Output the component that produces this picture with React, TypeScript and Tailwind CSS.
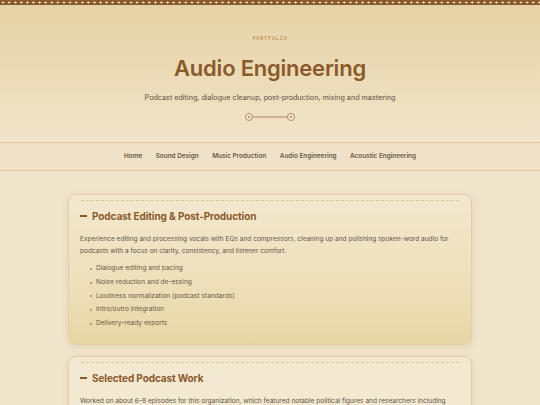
const nav = ["Home", "Sound Design", "Music Production", "Audio Engineering", "Acoustic Engineering"];

const skills = [
  "Dialogue editing and pacing",
  "Noise reduction and de-essing",
  "Loudness normalization (podcast standards)",
  "Intro/outro integration",
  "Delivery-ready exports",
];

function Ornament() {
  return (
    <svg width="52" height="10" viewBox="0 0 52 10" className="mx-auto block">
      <line x1="9" y1="5" x2="43" y2="5" stroke="#b08a62" strokeWidth="1" />
      <circle cx="5" cy="5" r="3.6" fill="none" stroke="#b08a62" strokeWidth="0.9" />
      <circle cx="5" cy="5" r="1" fill="#b08a62" />
      <circle cx="47" cy="5" r="3.6" fill="none" stroke="#b08a62" strokeWidth="0.9" />
      <circle cx="47" cy="5" r="1" fill="#b08a62" />
    </svg>
  );
}

function Card({ title, children, className = "" }: { title: string; children: React.ReactNode; className?: string }) {
  return (
    <section
      className={`rounded-[8px] border border-[#e2cfa6] px-[11px] pt-[5px] shadow-[0_2px_6px_rgba(120,80,30,0.12)] ${className}`}
    >
      <div className="mx-px border-t border-dashed border-[#d9c6a0]" />
      <h2 className="mt-[8px] flex items-center gap-[5px] text-[10px] font-bold leading-[14px] tracking-[-0.01em] text-[#8b5a2b]">
        <span className="h-[1.5px] w-[7px] bg-[#8b5a2b]" />
        {title}
      </h2>
      {children}
    </section>
  );
}

export default function App() {
  return (
    <div className="min-h-screen bg-[#f0e4cb] font-['Inter',sans-serif] text-[#65564a]">
      <div className="h-[5px] bg-[#8b5a2b] bg-[radial-gradient(circle,#f2dfbd_0.9px,transparent_1.2px)] bg-[length:6.1px_5px]" />

      <header className="bg-[linear-gradient(180deg,#e6d2a6_0%,#ecdcb8_55%,#f0e4cb_100%)] pb-[20px] pt-[29px] text-center">
        <div className="font-['DejaVu_Sans_Mono',monospace] text-[5px] leading-[8px] tracking-[0.18em] text-[#b07a45]">
          PORTFOLIO
        </div>
        <h1 className="mt-[13px] text-[22px] font-semibold leading-[26px] tracking-[-0.01em] text-[#8b5a2b]">
          Audio Engineering
        </h1>
        <p className="mt-[12px] text-[7.2px] leading-[10px] text-[#5f5040]">
          Podcast editing, dialogue cleanup, post-production, mixing and mastering
        </p>
        <div className="mt-[9px]">
          <Ornament />
        </div>
      </header>

      <nav className="border-y border-[#dcc9a3] bg-[#efe2c8]">
        <ul className="flex h-[27px] items-center justify-center gap-[13.5px] text-[6.4px] font-semibold text-[#6b5a45]">
          {nav.map((n) => (
            <li key={n}>{n}</li>
          ))}
        </ul>
      </nav>

      <main className="mx-auto flex w-[404px] flex-col gap-[11px] pt-[23px]">
        <Card
          title="Podcast Editing & Post-Production"
          className="bg-[linear-gradient(180deg,#f3e8cf_0%,#eedfb9_60%,#e8d6a6_100%)] pb-[13px]"
        >
          <p className="mt-[10px] text-[6.55px] leading-[12px]">
            Experience editing and processing vocals with EQs and compressors, cleaning up and polishing spoken-word audio for
            podcasts with a focus on clarity, consistency, and listener comfort.
          </p>
          <ul className="mt-[5px] flex flex-col text-[6.6px] leading-[13.75px] text-[#6b5a45]">
            {skills.map((s) => (
              <li key={s} className="flex items-center gap-[4px] pl-[10px]">
                <span className="h-[2px] w-[2px] rounded-full bg-[#c0803f]" />
                {s}
              </li>
            ))}
          </ul>
        </Card>

        <Card title="Selected Podcast Work" className="bg-[#f3e8d0] pb-[13px]">
          <p className="mt-[10px] text-[6.55px] leading-[12px]">
            Worked on about 6–8 episodes for this organization, which featured notable political figures and researchers including
          </p>
        </Card>
      </main>
    </div>
  );
}
